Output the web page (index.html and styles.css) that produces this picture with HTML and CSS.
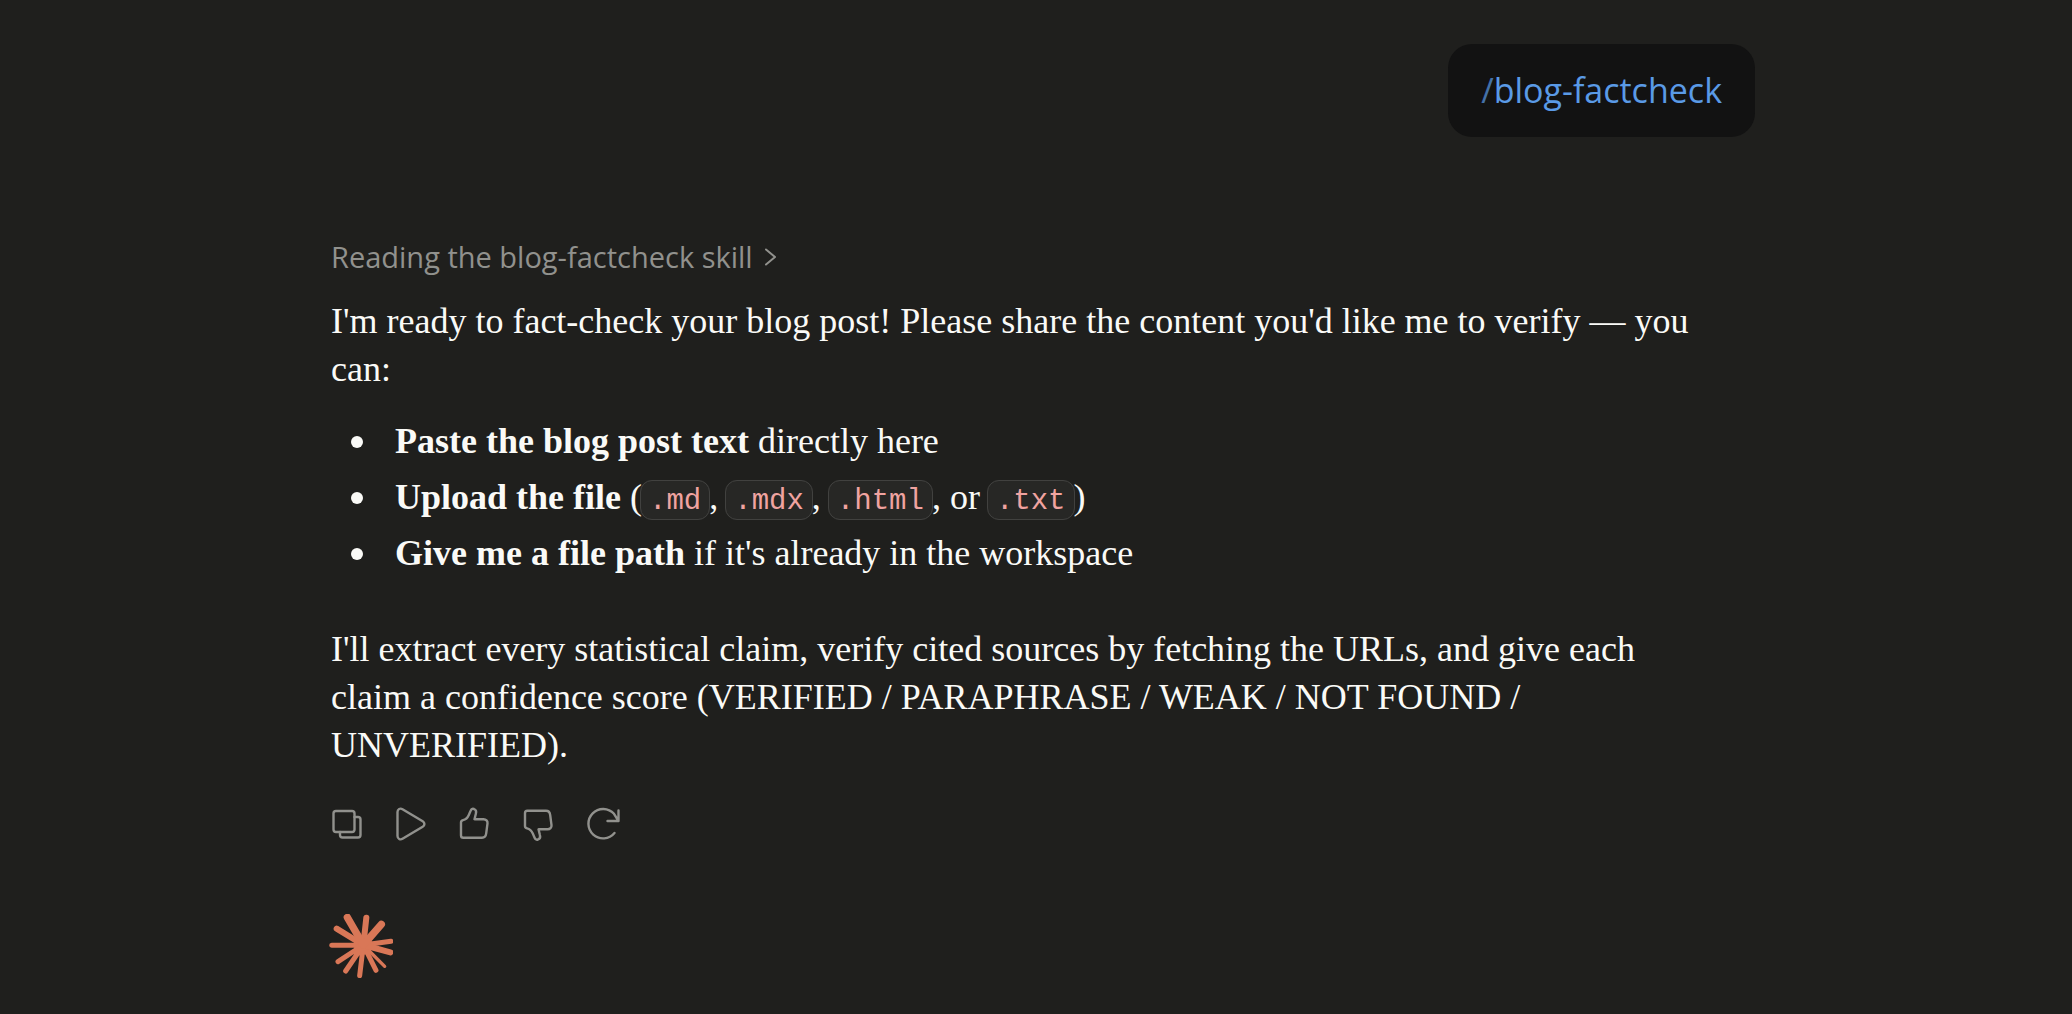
FILE: index.html
```html
<!DOCTYPE html>
<html lang="en">
<head>
	<meta charset="UTF-8">
	<meta name="viewport" content="width=device-width, initial-scale=1">
	<title>blog-factcheck</title>
	<link rel="stylesheet" href="styles.css">
</head>
<body>
	<main class="chat">
		<div class="user-row">
			<div class="bubble"><span class="slash">/</span>blog-factcheck</div>
		</div>

		<div class="reply">
			<button class="status" type="button">
				Reading the blog-factcheck skill
				<svg class="chevron" viewBox="0 0 12 18"><path d="M1 1.500L10 9L1 16.500"/></svg>
			</button>

			<div class="text">
				<p>I'm ready to fact-check your blog post! Please share the content you'd like me to verify — you can:</p>
				<ul>
					<li><b>Paste the blog post text</b> directly here</li>
					<li><b>Upload the file</b> (<code>.md</code>, <code>.mdx</code>, <code>.html</code>, or <code>.txt</code>)</li>
					<li><b>Give me a file path</b> if it's already in the workspace</li>
				</ul>
				<p>I'll extract every statistical claim, verify cited sources by fetching the URLs, and give each claim a confidence score (VERIFIED / PARAPHRASE / WEAK / NOT FOUND / UNVERIFIED).</p>
			</div>

			<div class="actions">
				<button type="button" aria-label="Copy">
					<svg viewBox="0 0 40 40"><rect x="6.500" y="7" width="21" height="21" rx="2.500"/><path d="M27.500 13h3.500a2.500 2.500 0 0 1 2.500 2.500v15.500a2.500 2.500 0 0 1-2.500 2.500H15.500a2.500 2.500 0 0 1-2.500-2.500v-3"/></svg>
				</button>
				<button type="button" aria-label="Read aloud">
					<svg viewBox="0 0 40 40"><path d="M6.500 8v24c0 2.800 2.700 4.200 5 2.800l20.200-12.100c2.300-1.400 2.300-4 0-5.400L11.500 5.200C9.200 3.800 6.500 5.200 6.500 8z"/></svg>
				</button>
				<button type="button" aria-label="Good response">
					<svg viewBox="0 0 40 40"><path d="M6 18.500c0-1.200.8-2 2-2.300 3-.7 4.700-2.700 5.800-5.200l1.800-4.200c.7-1.800 2-2.300 3.400-1.800 1.800.7 2.500 2.500 1.900 4.500l-1.400 5.700h9c2.500 0 4.300 1.700 4 4.200l-1.300 10c-.3 2.500-2 4.300-4.200 4.300H8.300C7 33.700 6 32.800 6 31.400z"/></svg>
				</button>
				<button type="button" aria-label="Bad response">
					<svg viewBox="0 0 40 40"><path transform="translate(0 40.500) scale(1 -1)" d="M6 18.500c0-1.200.8-2 2-2.300 3-.7 4.700-2.700 5.800-5.200l1.800-4.200c.7-1.800 2-2.300 3.400-1.800 1.800.7 2.500 2.500 1.900 4.500l-1.400 5.700h9c2.500 0 4.300 1.700 4 4.200l-1.300 10c-.3 2.500-2 4.300-4.200 4.300H8.300C7 33.700 6 32.800 6 31.400z"/></svg>
				</button>
				<button type="button" aria-label="Retry">
					<svg viewBox="0 0 40 40"><path d="M31.500 29A14.700 14.700 0 1 1 31 9.800L35.500 17M35.500 6.500V17H24.500"/></svg>
				</button>
			</div>

			<svg class="spark" viewBox="42 42 192 192" role="img" aria-label="Assistant">
				<circle cx="145" cy="136" r="28"/>
				<path class="w9" d="M145 135L209 199"/>
				<path class="w13" d="M145 135L228 124M145 135L183 211M145 135L134 227M145 135L92 213M145 135L69 185M145 135L50 136"/>
				<path class="w16" d="M145 135L154 53M145 135L226 157M145 135L65 86"/>
				<path class="w20" d="M145 135L97 52M145 135L199 73"/>
			</svg>
		</div>
	</main>
</body>
</html>
```
FILE: styles.css
```css
* {
	box-sizing: border-box;
}
body {
	margin: 0;
	background-color: #1f1f1d;
	color: #fafaf7;
	font-family: "Open Sans", sans-serif;
}
.chat {
	max-width: 1438px;
	margin: 0 auto;
	padding: 44px 0 32px;
}

/* user message */
.user-row {
	display: flex;
	justify-content: flex-end;
	margin-bottom: 100px;
}
.bubble {
	padding: 22px 33px 23px;
	border-radius: 24px;
	background-color: #121212;
	color: #5a9ae6;
	font-size: 34px;
	line-height: 48px;
}
.slash {
	opacity: 0.7;
}

/* assistant message */
.reply {
	padding: 0 54px 0 14px;
}
button {
	padding: 0;
	border: 0;
	background: none;
	color: #91918d;
	font-family: inherit;
	cursor: pointer;
}
svg {
	display: block;
	fill: none;
	stroke: currentColor;
	stroke-width: 2;
	stroke-linecap: round;
	stroke-linejoin: round;
}
.status {
	display: flex;
	align-items: center;
	gap: 12px;
	margin-bottom: 20px;
	font-size: 29px;
	line-height: 40px;
}
.chevron {
	width: 12px;
	height: 18px;
}
.text {
	font-family: "Liberation Serif", serif;
	font-size: 36px;
	line-height: 48px;
}
.text p {
	margin: 0;
}
.text ul {
	margin: 24px 0 48px;
	padding-left: 64px;
	list-style: none;
}
.text li + li {
	margin-top: 8px;
}
.text li::before {
	content: "";
	display: inline-block;
	width: 12px;
	height: 12px;
	margin: 0 32px 0 -44px;
	border-radius: 50%;
	background-color: #fafaf7;
	vertical-align: 5px;
}
code {
	margin: 0 -1px 0 -2px;
	padding: 4px 8px 1px;
	border: 1px solid #41413f;
	border-radius: 12px;
	background-color: #272725;
	color: #f0a3a0;
	font-family: "Liberation Mono", monospace;
	font-size: 29px;
	line-height: 1;
}
.actions {
	display: flex;
	margin: 23px 0 58px -16px;
}
.actions button {
	display: flex;
	align-items: center;
	justify-content: center;
	width: 64px;
	height: 64px;
}
.actions svg {
	width: 40px;
	height: 40px;
	stroke-width: 2.4;
}
.spark {
	width: 64px;
	height: 64px;
	margin-left: -2px;
	stroke: #d97757;
}
.spark circle {
	fill: #d97757;
	stroke: none;
}
.w9 { stroke-width: 10; }
.w13 { stroke-width: 15; }
.w16 { stroke-width: 18; }
.w20 { stroke-width: 22; }
```
